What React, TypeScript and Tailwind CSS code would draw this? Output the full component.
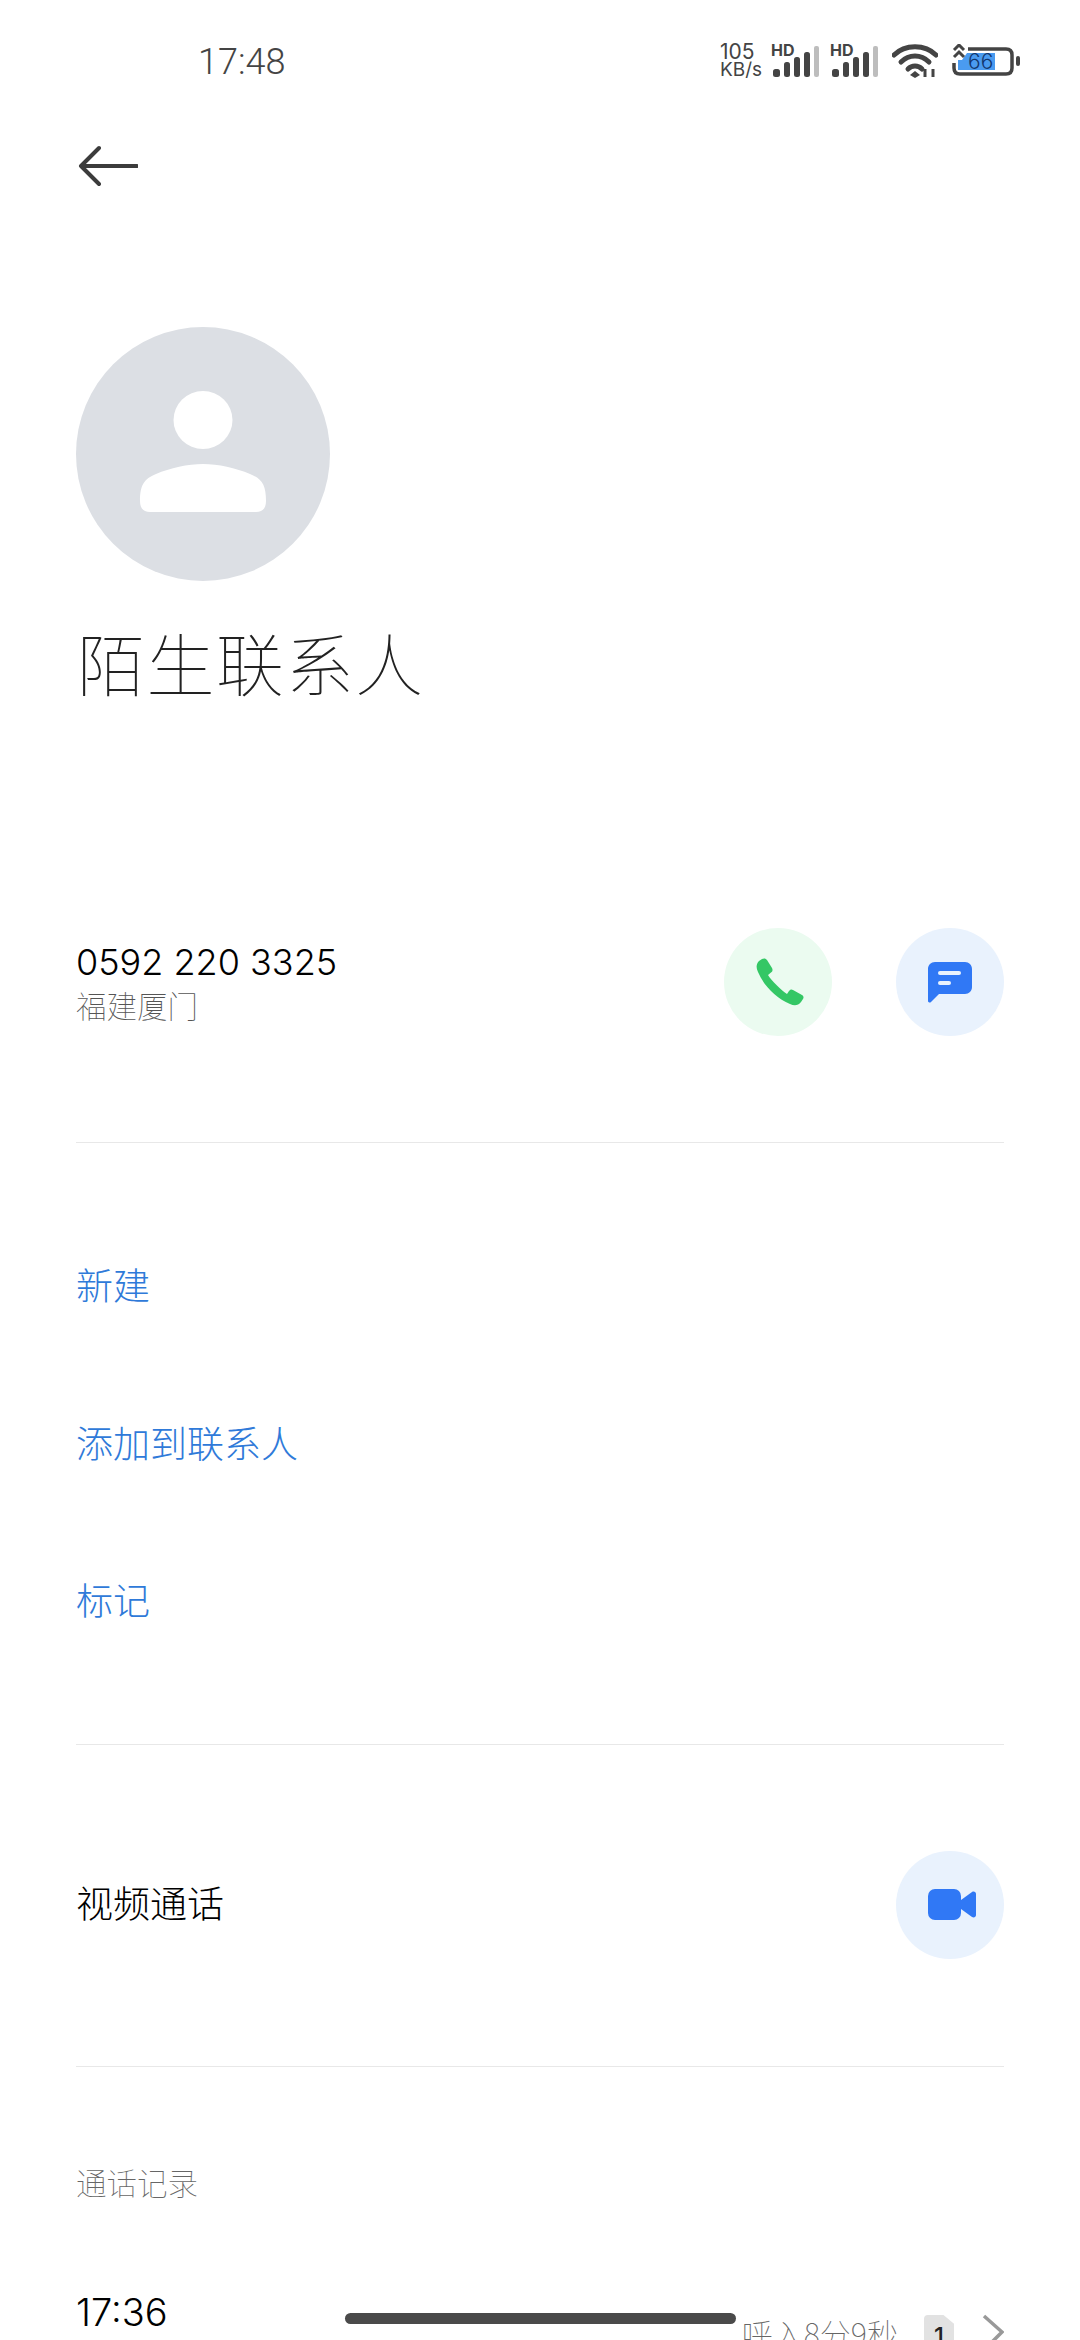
const cjkFont = { fontFamily: '"Noto Sans CJK SC", sans-serif' };
const numFont = { fontFamily: 'Inter, sans-serif' };

function SignalIcon() {
  return (
    <div className="relative w-[47px] h-[32px] ml-[12px]">
      <span className="absolute left-[-2px] top-[-3px] text-[16px] leading-[16px] font-bold text-[#444]">HD</span>
      <svg className="absolute left-0 top-0" width="47" height="32" viewBox="0 0 47 32" fill="none">
        <rect x="0" y="24" width="7" height="8" rx="2.5" fill="#444" />
        <rect x="11" y="17" width="6" height="15" rx="2.5" fill="#444" />
        <rect x="21" y="12" width="6" height="20" rx="2.5" fill="#444" />
        <rect x="31" y="7" width="6" height="25" rx="2.5" fill="#444" />
        <rect x="41" y="1" width="5" height="31" rx="2" fill="#bdbdbd" />
      </svg>
    </div>
  );
}

function StatusBar() {
  return (
    <div className="flex items-center h-[82px] pl-[198px] pr-[60px] pt-[40px] justify-between" style={numFont}>
      <span className="text-[36px] leading-[42px] font-light text-[#444] mt-[2px]" style={{ fontFamily: 'Roboto, sans-serif' }}>
        17:48
      </span>
      <div className="flex items-center">
        <div className="flex flex-col text-[#444] w-[41px] whitespace-nowrap">
          <span className="text-[21px] leading-[18px]">105</span>
          <span className="text-[19px] leading-[18px]">KB/s</span>
        </div>
        <SignalIcon />
        <SignalIcon />
        {/* wifi */}
        <svg className="ml-[13px]" width="46" height="34" viewBox="0 0 46 34" fill="none">
          <path d="M2 11C13 0 33 0 44 11" stroke="#444" strokeWidth="5" strokeLinecap="round" />
          <path d="M9 18C17 10 29 10 37 18" stroke="#444" strokeWidth="5" strokeLinecap="round" />
          <path d="M16 25C20 21 26 21 30 25" stroke="#444" strokeWidth="5" strokeLinecap="round" />
          <path d="M18 31L23 27L28 31L23 34Z" fill="#444" />
          <path d="M33 25V33M41 25V33" stroke="#444" strokeWidth="3" />
        </svg>
        {/* battery */}
        <div className="relative w-[68px] h-[34px] ml-[14px]">
          <svg className="absolute left-0 top-0" width="68" height="34" viewBox="0 0 68 34" fill="none">
            <path d="M6 16L10 16L15 9L43 9L43 26L6 26Z" fill="#4a9bf0" />
            <path d="M2 19V24C2 28 4 30 8 30H54C58 30 60 28 60 24V11C60 7 58 5 54 5H16" stroke="#444" strokeWidth="3.5" />
            <rect x="64" y="12" width="4" height="10" rx="2" fill="#444" />
            <path d="M2 6L7 1L12 6M2 13L7 8L12 13" stroke="#444" strokeWidth="3" />
          </svg>
          <span className="absolute left-[16px] top-[6px] text-[21px] leading-[24px] font-light text-[#12366e]">66</span>
        </div>
      </div>
    </div>
  );
}

function RoundButton({ tone, children }: { tone: 'green' | 'blue'; children: React.ReactNode }) {
  return (
    <button className={`w-[108px] h-[108px] rounded-full flex items-center justify-center ${tone === 'green' ? 'bg-[#ebfbf0]' : 'bg-[#e9f2fd]'}`}>
      {children}
    </button>
  );
}

export default function App() {
  return (
    <div className="relative w-[1080px] h-[2340px] overflow-hidden bg-white" style={cjkFont}>
      <StatusBar />

      <main className="flex flex-col pl-[76px] pr-[76px]">
        {/* Back */}
        <svg className="mt-[62px] ml-[2px]" width="60" height="44" viewBox="0 0 60 44" fill="none">
          <path d="M59 22H3M21 4L3 22L21 40" stroke="#3c3c3c" strokeWidth="4" strokeLinecap="round" strokeLinejoin="round" />
        </svg>

        {/* Avatar */}
        <div className="mt-[139px] w-[254px] h-[254px] rounded-full bg-[#dcdfe4]">
          <svg width="254" height="254" viewBox="0 0 254 254" fill="none">
            <ellipse cx="127" cy="93" rx="29.5" ry="29" fill="#fff" />
            <path d="M64 174C64 158 68 152 80 147C94 141 112 137 127 137C142 137 160 141 174 147C186 152 190 158 190 174C190 182 186 185 180 185H74C68 185 64 182 64 174Z" fill="#fff" />
          </svg>
        </div>

        <h1 className="mt-[37px] ml-[1px] text-[68px] leading-[88px] font-thin tracking-[1.5px] text-[#222]">陌生联系人</h1>

        {/* Number */}
        <section className="mt-[222px] flex items-center justify-between h-[108px]">
          <div className="flex flex-col">
            <span className="text-[36px] leading-[46px] font-light text-black" style={numFont}>
              0592 220 3325
            </span>
            <span className="text-[30.5px] leading-[40px] font-thin text-[#555]">福建厦门</span>
          </div>
          <div className="flex gap-[64px]">
            <RoundButton tone="green">
              <svg className="ml-[4px]" width="48" height="48" viewBox="0 0 48 48">
                <path d="M6 1L3 3C0 6 0 10 2 14C8 28 20 40 34 46C38 48 42 48 45 44L47 41C48 39.500 47.500 38 46 37L37 32C35.500 31 34 31.500 33 33L31 36C26 33 15 22 12 17L15 14.500C16.500 13.500 17 12 16 10L11 2C10 .5 8 0 6 1Z" fill="#34c765" />
              </svg>
            </RoundButton>
            <RoundButton tone="blue">
              <svg width="44" height="41" viewBox="0 0 44 41">
                <path d="M7 0H37C41 0 44 3 44 7V25C44 29 41 32 37 32H11L3 40C2 41 0 40.500 0 39V7C0 3 3 0 7 0Z" fill="#3078f5" />
                <rect x="10" y="9" width="23" height="4" rx="2" fill="#e9f2fd" />
                <rect x="10" y="19" width="13" height="4" rx="2" fill="#e9f2fd" />
              </svg>
            </RoundButton>
          </div>
        </section>

        <div className="mt-[106px] h-[1px] bg-[#e8e8e8]" />

        {/* Actions */}
        <nav className="flex flex-col gap-[109.5px] mt-[117px] text-[37px] leading-[48px] font-light text-[#2f7ad9]">
          <span>新建</span>
          <span>添加到联系人</span>
          <span>标记</span>
        </nav>

        <div className="mt-[121px] h-[1px] bg-[#e8e8e8]" />

        {/* Video */}
        <section className="mt-[106px] flex items-center justify-between h-[108px]">
          <span className="text-[37px] leading-[48px] font-light text-black pb-[6px]">视频通话</span>
          <RoundButton tone="blue">
            <svg className="ml-[4px]" width="48" height="32" viewBox="0 0 48 32">
              <rect x="0" y="0" width="33" height="31" rx="7" fill="#3078f5" />
              <path d="M33 11L44 3C46 2 48 3 48 5V26C48 28 46 29 44 28L33 20Z" fill="#3078f5" />
            </svg>
          </RoundButton>
        </section>

        <div className="mt-[107px] h-[1px] bg-[#e8e8e8]" />

        <span className="mt-[95px] text-[30.5px] leading-[40px] font-thin text-[#666]">通话记录</span>

        {/* Call log row */}
        <div className="mt-[87px] flex items-start justify-between">
          <span className="text-[38px] leading-[46px] font-light text-black" style={numFont}>
            17:36
          </span>
          <div className="flex items-start mt-[24px]">
            <span className="text-[31px] leading-[40px] font-thin text-[#666]">呼入8分9秒</span>
            <span
              className="ml-[26px] mt-[2px] w-[30px] h-[40px] rounded-[4px] bg-[#e2e2e2] text-[24px] leading-[44px] text-center font-medium text-[#222] [clip-path:polygon(0_0,65%_0,100%_22%,100%_100%,0_100%)]"
              style={numFont}
            >
              1
            </span>
            <svg className="ml-[28px] mt-[1px]" width="22" height="40" viewBox="0 0 22 40" fill="none">
              <path d="M2 2L20 18L2 36" stroke="#999" strokeWidth="3.500" />
            </svg>
          </div>
        </div>
      </main>

      {/* Gesture pill */}
      <div className="absolute left-[345px] top-[2313px] w-[391px] h-[11px] rounded-full bg-[#4a4a4a]" />
    </div>
  );
}
